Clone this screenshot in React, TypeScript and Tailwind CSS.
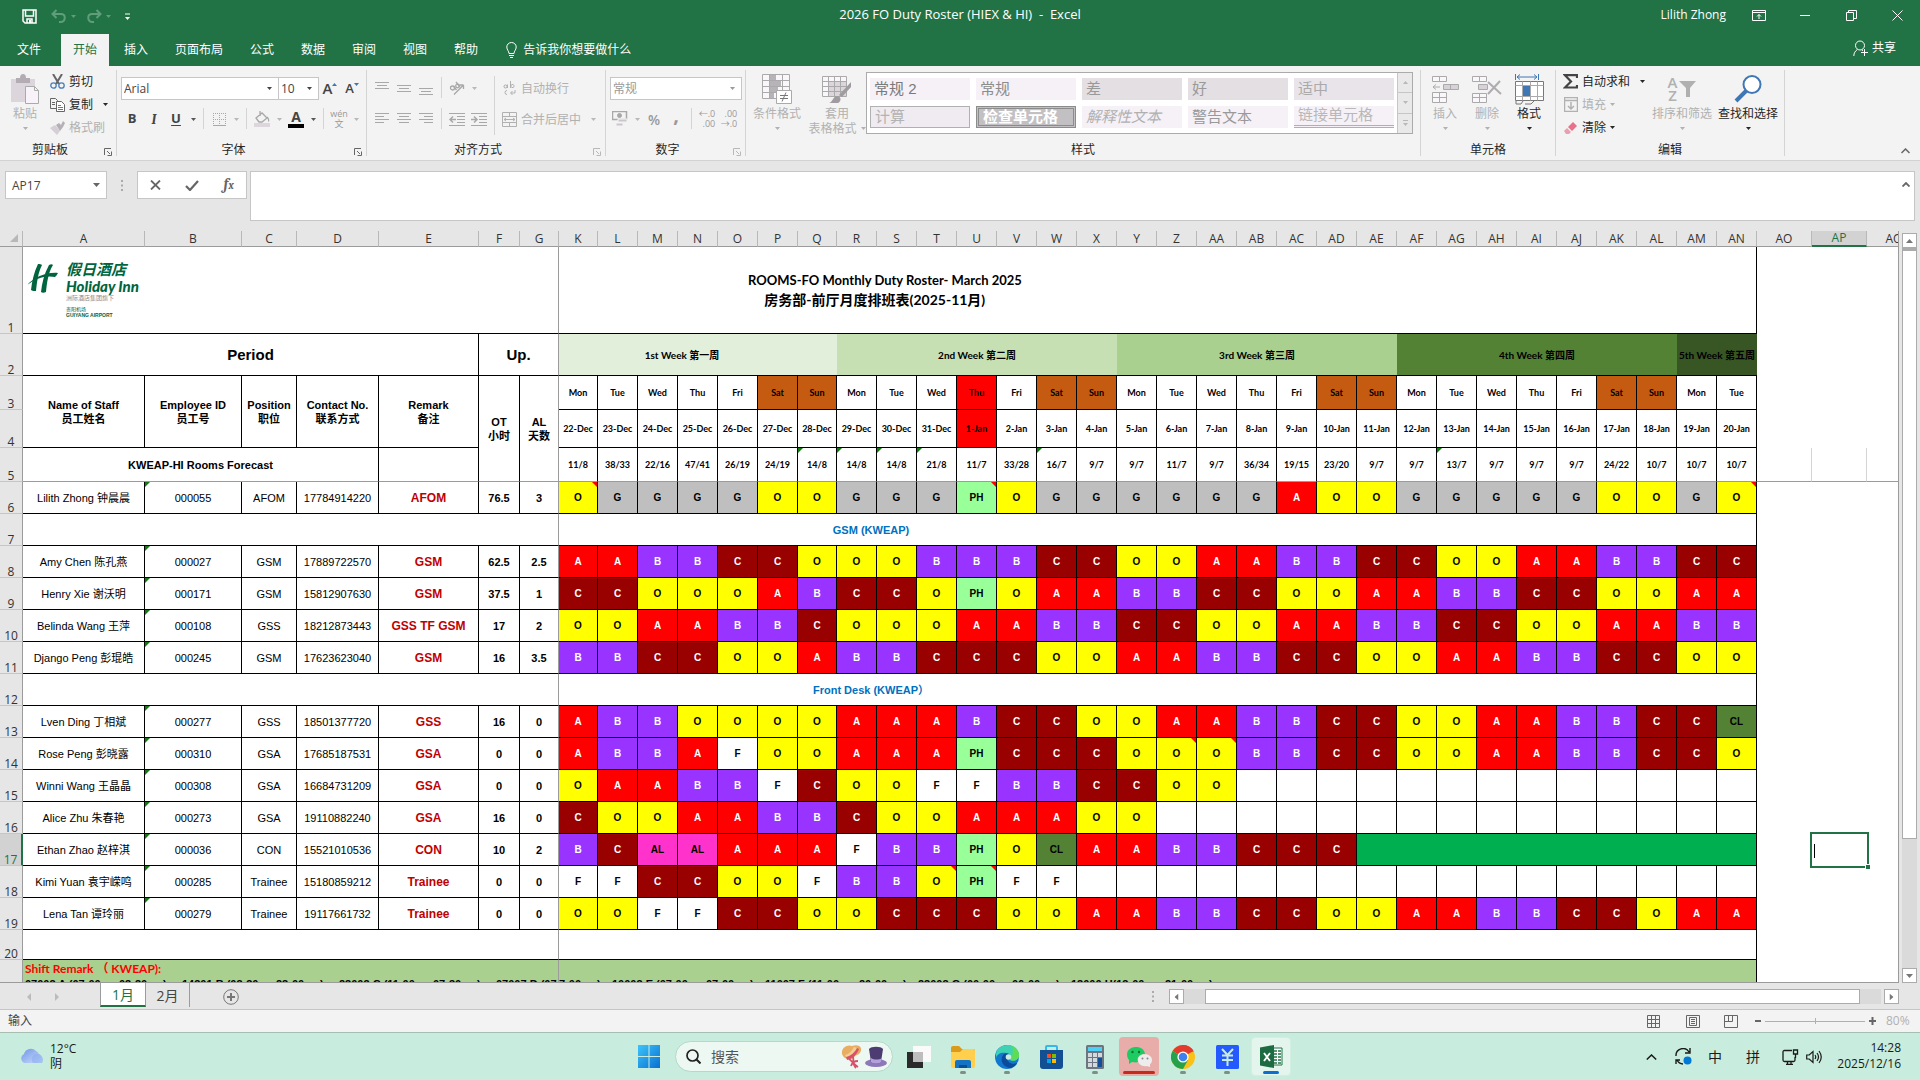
import React from 'react';
import { clsx } from 'clsx';

interface Staff {
  row: number;
  name: string;
  id: string;
  position: string;
  contact: string;
  remark: string;
  ot: string;
  al: string;
  shifts: string;
  notes?: number[];
  fill?: number;
}

const DATE_COLUMNS = 'K L M N O P Q R S T U V W X Y Z AA AB AC AD AE AF AG AH AI AJ AK AL AM AN'.split(' ');
const WEEKDAYS = ['Mon', 'Tue', 'Wed', 'Thu', 'Fri', 'Sat', 'Sun'];
const HOLIDAY = 10;

const DATES = DATE_COLUMNS.map((_, i) => (i < 10 ? `${22 + i}-Dec` : `${i - 9}-Jan`));

const FORECAST =
  '11/8 38/33 22/16 47/41 26/19 24/19 14/8 14/8 14/8 21/8 11/7 33/28 16/7 9/7 9/7 11/7 9/7 36/34 19/15 23/20 9/7 9/7 13/7 9/7 9/7 9/7 24/22 10/7 10/7 10/7'.split(' ');
const FORECAST_FLAGS = [6, 7, 8, 9, 12, 22];

const WEEKS = [
  { label: '1st Week 第一周', span: 7, tone: 'bg-[#e2efda] pr-8' },
  { label: '2nd Week 第二周', span: 7, tone: 'bg-[#c6e0b4]' },
  { label: '3rd Week 第三周', span: 7, tone: 'bg-[#a9d08e]' },
  { label: '4th Week 第四周', span: 7, tone: 'bg-[#548235]' },
  { label: '5th Week 第五周', span: 2, tone: 'bg-[#375623]' },
];

const AFOM: Staff[] = [
  { row: 6, name: 'Lilith Zhong 钟晨晨', id: '000055', position: 'AFOM', contact: '17784914220', remark: 'AFOM', ot: '76.5', al: '3', shifts: 'O G G G G O O G G G PH O G G G G G G A O O G G G G G O O G O', notes: [0, 10, 29] },
];

const GSM: Staff[] = [
  { row: 8, name: 'Amy Chen 陈孔燕', id: '000027', position: 'GSM', contact: '17889722570', remark: 'GSM', ot: '62.5', al: '2.5', shifts: 'A A B B C C O O O B B B C C O O A A B B C C O O A A B B C C' },
  { row: 9, name: 'Henry Xie 谢沃明', id: '000171', position: 'GSM', contact: '15812907630', remark: 'GSM', ot: '37.5', al: '1', shifts: 'C C O O O A B C C O PH O A A B B C C O O A A B B C C O O A A' },
  { row: 10, name: 'Belinda Wang 王萍', id: '000108', position: 'GSS', contact: '18212873443', remark: 'GSS TF GSM', ot: '17', al: '2', shifts: 'O O A A B B C O O O A A B B C C O O A A B B C C O O A A B B' },
  { row: 11, name: 'Django Peng 彭琨皓', id: '000245', position: 'GSM', contact: '17623623040', remark: 'GSM', ot: '16', al: '3.5', shifts: 'B B C C O O A B B C C C O O A A B B C C O O A A B B C C O O' },
];

const FRONT_DESK: Staff[] = [
  { row: 13, name: 'Lven Ding 丁相斌', id: '000277', position: 'GSS', contact: '18501377720', remark: 'GSS', ot: '16', al: '0', shifts: 'A B B O O O O A A A B C C O O A A B B C C O O A A B B C C CL' },
  { row: 14, name: 'Rose Peng 彭晓露', id: '000310', position: 'GSA', contact: '17685187531', remark: 'GSA', ot: '0', al: '0', shifts: 'A B B A F O O A A A PH C C C O O O B B C C O O A A B B C C O', notes: [15, 16] },
  { row: 15, name: 'Winni Wang 王晶晶', id: '000308', position: 'GSA', contact: '16684731209', remark: 'GSA', ot: '0', al: '0', shifts: 'O A A B B F C O O F F B B C C O O' },
  { row: 16, name: 'Alice Zhu 朱春艳', id: '000273', position: 'GSA', contact: '19110882240', remark: 'GSA', ot: '16', al: '0', shifts: 'C O O A A B B C O O A A A O O' },
  { row: 17, name: 'Ethan Zhao 赵梓淇', id: '000036', position: 'CON', contact: '15521010536', remark: 'CON', ot: '10', al: '2', shifts: 'B C AL AL A A A F B B PH O CL A A B B C C C', fill: 10 },
  { row: 18, name: 'Kimi Yuan 袁宇嵘鸣', id: '000285', position: 'Trainee', contact: '15180859212', remark: 'Trainee', ot: '0', al: '0', shifts: 'F F C C O O F B B O PH F F', notes: [9, 10] },
  { row: 19, name: 'Lena Tan 谭玲丽', id: '000279', position: 'Trainee', contact: '19117661732', remark: 'Trainee', ot: '0', al: '0', shifts: 'O O F F C C O O C C C O O A A B B C C O O A A B B C C O A A' },
];

const SHIFT_TONE: Record<string, string> = {
  A: 'bg-[#ff0000] text-white',
  B: 'bg-[#9933ff] text-white',
  C: 'bg-[#990000] text-white',
  O: 'bg-[#ffff00] text-black',
  G: 'bg-[#bfbfbf] text-black',
  F: 'bg-white text-black',
  PH: 'bg-[#99ff99] text-black',
  AL: 'bg-[#ff33cc] text-black',
  CL: 'bg-[#548235] text-black',
};

const TABS = ['插入', '页面布局', '公式', '数据', '审阅', '视图', '帮助'];

/* ---------- small shared pieces ---------- */

interface ArtProps {
  w: number;
  h: number;
  className?: string;
  children: React.ReactNode;
}

const Art: React.FC<ArtProps> = ({ w, h, className, children }) => (
  <svg width={w} height={h} viewBox={`0 0 ${w} ${h}`} fill="none" stroke="currentColor" className={clsx('shrink-0', className)} aria-hidden="true">
    {children}
  </svg>
);

const Arrow: React.FC<{ className?: string }> = ({ className }) => (
  <Art w={5} h={3} className={className}>
    <path d="M0 0h5L2.5 3z" fill="currentColor" stroke="none" />
  </Art>
);

const ArrowButton: React.FC<{ label: string; off?: boolean }> = ({ label, off }) => (
  <button aria-label={label} className={clsx('flex h-[22px] w-3 items-center justify-center', off ? 'text-[#b8b8b8]' : 'text-[#555]')}>
    <Arrow />
  </button>
);

const Tool: React.FC<{ label: string; off?: boolean; children: React.ReactNode }> = ({ label, off, children }) => (
  <button aria-label={label} className={clsx('flex h-[22px] w-[22px] items-center justify-center', off ? 'text-[#a8a8a8]' : 'text-[#444]')}>
    {children}
  </button>
);

const Sep = () => (
  <div className="flex w-[9px] justify-center">
    <div className="h-[21px] w-px bg-[#d4d4d4]" />
  </div>
);

const Group: React.FC<{ label: string; launcher?: 'on' | 'off'; className?: string; children: React.ReactNode }> = ({ label, launcher, className, children }) => (
  <section className={clsx('relative my-1 flex flex-col border-r border-[#d4d4d4]', className)}>
    <div className="flex h-[71px]">{children}</div>
    <div className={clsx('h-[15px] text-center leading-[17px] text-[#262626]', launcher && 'pr-4')}>{label}</div>
    {launcher && (
      <button aria-label={`${label}设置`} className={clsx('absolute right-1 bottom-0', launcher === 'on' ? 'text-[#666]' : 'text-[#b8b8b8]')}>
        <Art w={8} h={8}>
          <path d="M.5 7V.5H7M3 3l3 3M7.5 3.5v4h-4" />
        </Art>
      </button>
    )}
  </section>
);

const BigButton: React.FC<{ label: string; off?: boolean; className?: string; children: React.ReactNode }> = ({ label, off, className, children }) => (
  <button className={clsx('flex flex-col items-center pt-1 whitespace-nowrap', off ? 'text-[#b1b1b1]' : 'text-[#262626]', className)}>
    <span className="flex h-[30px] items-center">{children}</span>
    <span className="leading-5">{label}</span>
    <span className="flex h-2 items-center">
      <Arrow />
    </span>
  </button>
);

const SmallButton: React.FC<{ label: string; off?: boolean; arrow?: 'near' | 'far'; children: React.ReactNode }> = ({ label, off, arrow, children }) => (
  <button className={clsx('flex h-[23px] items-center gap-1 whitespace-nowrap', off ? 'text-[#b1b1b1]' : 'text-[#262626]')}>
    <span className="flex w-[15px] justify-center">{children}</span>
    {label}
    {arrow && <Arrow className={arrow === 'far' ? 'ml-1.5' : undefined} />}
  </button>
);

const Lines: React.FC<{ rows: [number, number, number][] }> = ({ rows }) => (
  <Art w={14} h={14}>
    {rows.map(([x1, x2, y]) => (
      <path key={y} d={`M${x1} ${y}.5H${x2}`} />
    ))}
  </Art>
);

const Picker: React.FC<{ label: string; value: string; off?: boolean; className?: string }> = ({ label, value, off, className }) => (
  <div className={clsx('relative h-[23px] border border-[#c6c6c6] bg-white', off ? 'text-[#9a9a9a]' : 'text-[#444]', className)}>
    <select aria-label={label} defaultValue={value} className="block h-full w-full appearance-none bg-transparent pl-0.5 outline-none">
      <option>{value}</option>
    </select>
    <Arrow className="pointer-events-none absolute top-[9px] right-1.5" />
  </div>
);

/* ---------- title bar and ribbon ---------- */

const TitleBar = () => (
  <header className="grid h-[34px] shrink-0 grid-cols-[1fr_auto_1fr] text-white">
    <div className="flex items-center pb-0.5 pl-[22px]">
      <button aria-label="保存">
        <Art w={15} h={15}>
          <path d="M1 1h13v13H3L1 12zM3.500 1v6h8V1M5 14v-4h5v4" strokeWidth="1.500" />
          <path d="M7 11h2v3H7z" fill="currentColor" stroke="none" />
        </Art>
      </button>
      <button aria-label="撤消" className="ml-3.5 flex items-center gap-1 text-[#5f9d7b]">
        <Art w={16} h={14}>
          <path d="M5.500 1L1.500 5l4 4M2 5h8c5 0 5 7 0 8H8" strokeWidth="2" />
        </Art>
        <Arrow />
      </button>
      <button aria-label="恢复" className="ml-2.5 flex items-center gap-1 text-[#5f9d7b]">
        <Art w={16} h={14}>
          <path d="M10.500 1l4 4-4 4M14 5H6C1 5 1 12 6 13h2" strokeWidth="2" />
        </Art>
        <Arrow />
      </button>
      <button aria-label="自定义快速访问工具栏" className="ml-3.5">
        <Art w={5} h={7}>
          <path d="M0 1h5" />
          <path d="M0 4h5L2.500 7z" fill="currentColor" stroke="none" />
        </Art>
      </button>
    </div>
    <h1 className="self-center pb-1 text-[13px] whitespace-pre">2026 FO Duty Roster (HIEX &amp; HI)  -  Excel</h1>
    <div className="flex h-[30px] items-center justify-end">
      <span className="mr-2.5">Lilith Zhong</span>
      <button aria-label="功能区显示选项" className="flex w-[46px] justify-center">
        <Art w={14} h={11}>
          <path d="M.5.5h13v10H.5zM.5 2.500h13M7 9V4.500M5 6.500l2-2 2 2" />
        </Art>
      </button>
      <button aria-label="最小化" className="flex w-[46px] justify-center">
        <Art w={10} h={1}>
          <path d="M0 .5h10" />
        </Art>
      </button>
      <button aria-label="还原" className="flex w-[46px] justify-center">
        <Art w={11} h={11}>
          <path d="M.5 2.500h7v8h-7zM2.500 2.500v-2h8v8h-3" />
        </Art>
      </button>
      <button aria-label="关闭" className="flex w-[46px] justify-center">
        <Art w={11} h={11}>
          <path d="M.5.5l10 10M10.500.5l-10 10" />
        </Art>
      </button>
    </div>
  </header>
);

const RibbonTabs = () => (
  <nav className="flex h-8 shrink-0 items-stretch text-white">
    <button className="w-[58px]">文件</button>
    <div className="ml-[3px] flex gap-[3px]">
      <button className="bg-[#f3f3f3] px-[12px] text-[#217346]">开始</button>
      {TABS.map((tab) => (
        <button key={tab} className="px-[12px]">{tab}</button>
      ))}
    </div>
    <button className="ml-4 flex items-center gap-1.5">
      <Art w={11} h={16}>
        <path d="M3 11.500C3 9 .8 8 .8 5a4.700 4.500 0 019.400 0C10.200 8 8 9 8 11.500zM3 13.500h5M4 15.500h3" />
      </Art>
      告诉我你想要做什么
    </button>
    <button className="mr-6 ml-auto flex items-center gap-1 pb-1">
      <Art w={15} h={16}>
        <circle cx="7" cy="5.500" r="4.500" />
        <path d="M.8 16c0-3 1.500-5 3.500-6.500M9 10l1 .8M11.500 9v7M8 12.500h7" />
      </Art>
      共享
    </button>
  </nav>
);

const STYLE_CELLS = [
  { label: '常规 2', tone: 'bg-[#f5f1f7] text-[#7a7a7a]' },
  { label: '常规', tone: 'bg-[#f5f1f7] text-[#8c8c8c]' },
  { label: '差', tone: 'bg-[#e3dfe2] text-[#999]' },
  { label: '好', tone: 'bg-[#e3dfe2] text-[#999]' },
  { label: '适中', tone: 'bg-[#e8e4e9] text-[#aaa]' },
  { label: '计算', tone: 'bg-[#efebf0] text-[#b3b3b3] border border-[#b0b0b0]' },
  { label: '检查单元格', tone: 'bg-[#c2c0c3] text-white font-bold border-[3px] border-double border-[#8c8c8c]' },
  { label: '解释性文本', tone: 'bg-[#f5f1f7] text-[#b0b0b0] italic' },
  { label: '警告文本', tone: 'bg-[#f5f1f7] text-[#999]' },
  { label: '链接单元格', tone: 'bg-[#f5f1f7] text-[#b8b8b8] border-b-[3px] border-double border-[#b0b0b0]' },
];

const Ribbon = () => (
  <div className="flex h-[95px] shrink-0 border-b border-[#d2d2d2] bg-[#f3f3f3]">
    <Group label="剪贴板" launcher="on" className="w-[117px] shrink-0">
      <BigButton label="粘贴" off className="w-[50px] shrink-0">
        <Art w={28} h={30}>
          <path d="M0 5h24v23H0z" fill="#dcd6dc" stroke="none" />
          <path d="M5 4h4a3 4 0 016 0h4v5H5z" fill="#b3adb3" stroke="none" />
          <path d="M14.500 12.500h9l4 4v13h-13z" fill="#f7f3f8" stroke="#aaa" />
          <path d="M23.500 12.500v4h4" stroke="#aaa" />
        </Art>
      </BigButton>
      <div className="shrink-0">
        <SmallButton label="剪切">
          <Art w={15} h={15}>
            <path d="M3 0l6 10M12 0L6 10" stroke="#666" strokeWidth="2" />
            <circle cx="3.500" cy="11.500" r="2.700" stroke="#4a7ebb" strokeWidth="1.300" />
            <circle cx="11.500" cy="11.500" r="2.700" stroke="#4a7ebb" strokeWidth="1.300" />
          </Art>
        </SmallButton>
        <SmallButton label="复制" arrow="far">
          <Art w={15} h={14}>
            <path d="M.5.5h5l2 2v8h-7zM2 4.500h3M2 6.500h3" stroke="#666" />
            <path d="M6.500 3.500h5l3 3v7h-8z" fill="#fff" stroke="#666" />
            <path d="M8 7.500h3M8 9.500h5M8 11.500h5" stroke="#4a7ebb" />
          </Art>
        </SmallButton>
        <SmallButton label="格式刷" off>
          <Art w={15} h={14}>
            <path d="M0 7l5-3 5 6-3 4z" fill="#d5cfd5" stroke="none" />
            <path d="M6 4l3-2 2 2 2-4 2 2-2 4-3 4z" fill="#b5b0b5" stroke="none" />
          </Art>
        </SmallButton>
      </div>
    </Group>

    <Group label="字体" launcher="on" className="w-[250px] shrink-0">
      <div className="pt-[7px] pl-1">
        <div className="flex h-[23px] items-center">
          <Picker label="字体" value="Arial" className="w-[158px]" />
          <Picker label="字号" value="10" className="w-[40px] border-l-0" />
          <Tool label="增大字号">
            <span className="text-[15px] font-semibold">A</span>
            <Art w={5} h={12}><path d="M0 3h5L2.500 0z" fill="#3f77b5" stroke="none" /></Art>
          </Tool>
          <Tool label="减小字号">
            <span className="text-[13px] font-semibold">A</span>
            <Art w={5} h={12}><path d="M0 0h5L2.500 3z" fill="#3f77b5" stroke="none" /></Art>
          </Tool>
        </div>
        <div className="mt-2 flex">
          <Tool label="加粗"><b className="text-[13px]">B</b></Tool>
          <Tool label="倾斜"><i className="font-serif text-[14px] font-bold">I</i></Tool>
          <Tool label="下划线"><span className="text-[13px] font-bold underline underline-offset-2">U</span></Tool>
          <ArrowButton label="下划线选项" />
          <Sep />
          <Tool label="边框" off>
            <Art w={13} h={13}>
              <path d="M.5 0v12M6.500 0v12M12.500 0v12M0 .5h13M0 6.500h13" strokeDasharray="1 1" />
              <path d="M0 12.500h13" />
            </Art>
          </Tool>
          <ArrowButton label="边框选项" off />
          <Sep />
          <Tool label="填充颜色" off>
            <Art w={16} h={16}>
              <path d="M2 7l6-5 5 5-5 4H5zM6 0v5M13 6c2 2 2 4 1 4" strokeWidth="1.300" />
              <path d="M0 12h16v4H0z" fill="#ddd6dd" stroke="none" />
            </Art>
          </Tool>
          <ArrowButton label="填充颜色选项" off />
          <Tool label="字体颜色">
            <span className="flex flex-col items-center">
              <span className="text-[14px] leading-3 font-bold">A</span>
              <span className="mt-px h-[4px] w-4 bg-black" />
            </span>
          </Tool>
          <ArrowButton label="字体颜色选项" />
          <Sep />
          <Tool label="拼音指南" off>
            <span className="flex flex-col items-center text-[9px] leading-[10px] text-[#999]">
              <span>wén</span>
              <span>文</span>
            </span>
          </Tool>
          <ArrowButton label="拼音选项" off />
        </div>
      </div>
    </Group>

    <Group label="对齐方式" launcher="off" className="w-[239px] shrink-0">
      <div className="w-[127px] pt-[7px] pl-[4px]">
        <div className="flex h-[23px]">
          <Tool label="顶端对齐" off><Lines rows={[[0, 14, 1], [2, 12, 4], [0, 14, 7]]} /></Tool>
          <Tool label="垂直居中" off><Lines rows={[[0, 14, 4], [2, 12, 7], [0, 14, 10]]} /></Tool>
          <Tool label="底端对齐" off><Lines rows={[[0, 14, 7], [2, 12, 10], [0, 14, 13]]} /></Tool>
          <Sep />
          <Tool label="方向" off>
            <Art w={16} h={14}>
              <path d="M5 13.500L14.500 4M14.500 4h-4M14.500 4v4" strokeWidth="1.300" />
              <circle cx="3.500" cy="7" r="2" strokeWidth="1.300" />
              <path d="M4.500 5l3 4M7 1l4 5" strokeWidth="1.300" />
              <circle cx="8.500" cy="5" r="1.800" strokeWidth="1.300" />
            </Art>
          </Tool>
          <ArrowButton label="方向选项" off />
        </div>
        <div className="mt-2 flex">
          <Tool label="左对齐" off><Lines rows={[[0, 14, 1], [0, 9, 4], [0, 14, 7], [0, 9, 10]]} /></Tool>
          <Tool label="居中" off><Lines rows={[[0, 14, 1], [2, 12, 4], [0, 14, 7], [2, 12, 10]]} /></Tool>
          <Tool label="右对齐" off><Lines rows={[[0, 14, 1], [5, 14, 4], [0, 14, 7], [5, 14, 10]]} /></Tool>
          <Sep />
          <Tool label="减少缩进量" off>
            <Art w={16} h={13}><path d="M0 .5h16M8 3.500h8M8 6.500h8M8 9.500h8M0 12.500h16" /><path d="M1 6.500h6M4 3.500l-3 3 3 3" strokeWidth="1.500" /></Art>
          </Tool>
          <Tool label="增加缩进量" off>
            <Art w={16} h={13}><path d="M0 .5h16M8 3.500h8M8 6.500h8M8 9.500h8M0 12.500h16" /><path d="M0 6.500h6M3 3.500l3 3-3 3" strokeWidth="1.500" /></Art>
          </Tool>
        </div>
      </div>
      <div className="my-1.5 w-px bg-[#d4d4d4]" />
      <div className="pt-[7px] pl-[7px]">
        <SmallButton label="自动换行" off>
          <Art w={13} h={15}>
            <path d="M4.500 3.500v3.500M7.500 0v7M1 6a1.500 1.500 0 103-1 1.500 1.500 0 00-3 1M8 5.500a1.500 1.500 0 103-1 1.500 1.500 0 00-3 1M4 9.500a2 2 0 100 4M12 9v3H8M9.500 10l-2 2 2 2" />
          </Art>
        </SmallButton>
        <div className="mt-2 flex">
          <SmallButton label="合并后居中" off>
            <Art w={15} h={15}><path d="M.5.5h14v14H.5zM.5 4.500h14M.5 10.500h14M7.500.5v4M7.500 10.500v4M2 7.500h11M4 6L2 7.500 4 9M11 6l2 1.500L11 9" /></Art>
          </SmallButton>
          <span className="pl-1.5"><ArrowButton label="合并选项" off /></span>
        </div>
      </div>
    </Group>

    <Group label="数字" launcher="off" className="w-[140px] shrink-0">
      <div className="pt-[7px] pl-[3px]">
        <Picker label="数字格式" value="常规" off className="ml-px w-[132px]" />
        <div className="mt-2 flex">
          <Tool label="会计数字格式" off>
            <Art w={16} h={16}>
              <path d="M.5.5h14v8H.5z" strokeWidth="1.500" />
              <circle cx="7.500" cy="4.500" r="2" fill="currentColor" />
              <path d="M6 8h9v3H6zM4 12h7v3H4z" fill="#ccc6cc" stroke="#f3f3f3" />
            </Art>
          </Tool>
          <ArrowButton label="会计格式选项" off />
          <Tool label="百分比样式" off><span className="text-[14px] font-semibold text-[#999]">%</span></Tool>
          <Tool label="千位分隔样式" off><span className="pb-2 text-[20px] font-bold text-[#999]">,</span></Tool>
          <Sep />
          <Tool label="增加小数位数" off>
            <span className="flex flex-col text-right text-[9px] leading-[10px] text-[#999]">
              <span>←.0</span>
              <span>.00</span>
            </span>
          </Tool>
          <Tool label="减少小数位数" off>
            <span className="flex flex-col text-right text-[9px] leading-[10px] text-[#999]">
              <span>.00</span>
              <span>→.0</span>
            </span>
          </Tool>
        </div>
      </div>
    </Group>

    <Group label="样式" className="min-w-[300px] flex-1">
      <BigButton label="条件格式" off className="w-[62px] shrink-0">
        <Art w={30} h={30} className="text-[#aaa]">
          <path d="M.5.5h27v24H.5zM.5 6.500h27M.5 12.500h27M.5 18.500h27M7.500.5v24M20.500.5v24" fill="#faf7fa" />
          <path d="M8 1h6v5H8zM8 7h11v5H8zM8 13h8v5H8zM8 19h4v5H8z" fill="#b8b3b8" stroke="none" />
          <path d="M14.500 16.500h15v13h-15z" fill="#fff" />
          <path d="M18 21.500h8M18 24.500h8M24 18.500l-4 9" stroke="#777" />
        </Art>
      </BigButton>
      <button className="flex w-[58px] shrink-0 flex-col items-center pt-1 whitespace-nowrap text-[#b1b1b1]">
        <Art w={30} h={30} className="text-[#aaa]">
          <path d="M.5 2.500h24v20H.5z" fill="#faf7fa" />
          <path d="M7 8h17v14H7z" fill="#dcd6dc" stroke="none" />
          <path d="M.5 7.500h24M.5 12.500h24M.5 17.500h24M6.500 2.500v20M12.500 2.500v20M18.500 2.500v20" />
          <path d="M29 8v5l-9 10-3-2z" fill="#a09ba0" stroke="none" />
          <path d="M7 29c4-1 4-7 8-7s5 5 1 7z" fill="#a09ba0" stroke="none" />
        </Art>
        <span className="pt-0.5 leading-[15px]">套用</span>
        <span className="flex items-center gap-1 leading-[15px]">表格格式<Arrow /></span>
      </button>
      <div className="mt-0.5 mr-[7px] flex h-[62px] min-w-0 flex-1 border border-[#ababab] bg-white">
        <div className="grid min-w-0 flex-1 grid-cols-5 gap-1.5 overflow-hidden px-[3px] py-[5px] font-[family-name:'Liberation_Sans','Noto_Sans_CJK_SC',sans-serif] text-[15px]">
          {STYLE_CELLS.map((cell) => (
            <button key={cell.label} className={clsx('flex h-[22px] items-center px-1 text-left whitespace-nowrap', cell.tone)}>
              {cell.label}
            </button>
          ))}
        </div>
        <div className="flex w-[15px] flex-col border-l border-[#c6c6c6] bg-[#e9e9e9] text-[#b8b8b8]">
          <button aria-label="上一行" className="flex flex-1 items-center justify-center"><Arrow className="rotate-180" /></button>
          <button aria-label="下一行" className="flex flex-1 items-center justify-center border-y border-[#c6c6c6]"><Arrow /></button>
          <button aria-label="其他样式" className="flex flex-1 flex-col items-center justify-center gap-0.5">
            <span className="h-px w-[5px] bg-[#b8b8b8]" />
            <Arrow />
          </button>
        </div>
      </div>
    </Group>

    <Group label="单元格" className="w-[135px] shrink-0">
      <BigButton label="插入" off className="ml-[3px] w-[42px]">
        <Art w={27} h={28} className="text-[#aaa]">
          <path d="M.5 1.500h14v5H.5zM7.500 1.500v5M.5 17.500h14v10H.5zM.5 22.500h14M7.500 17.500v10M1 12h7M4 9.500L1 12l3 2.500" fill="#faf7fa" />
          <path d="M11.500 9.500h15v5h-15zM18.500 9.500v5" fill="#d8d2d8" />
        </Art>
      </BigButton>
      <BigButton label="删除" off className="w-[42px]">
        <Art w={30} h={28} className="text-[#aaa]">
          <path d="M.5 1.500h14v5H.5zM7.500 1.500v5M.5 18.500h14v9H.5zM.5 22.500h14M7.500 18.500v9" fill="#faf7fa" />
          <path d="M6.500 9.500h9v5h-9z" fill="#d8d2d8" />
          <path d="M16 7l13 12M28 6L16 19" stroke="#b0abb0" strokeWidth="2" />
        </Art>
      </BigButton>
      <BigButton label="格式" className="w-[42px]">
        <Art w={29} h={31} className="text-[#777]">
          <path d="M.5 0v6M23.500 0v6M2 3h20M5 .5L2 3l3 2.500M19 .5L22 3l-3 2.500" stroke="#3f77b5" />
          <path d="M.5 7.500h28v19H.5z" fill="#fff" />
          <path d="M.5 11.500h28M.5 22.500h28M7.500 7.500v19M15.500 7.500v19M22.500 7.500v19" stroke="#aaa" />
          <path d="M8 12h7v10H8z" fill="#3f77b5" stroke="none" />
          <path d="M1 27v3h5l2-3M10 30h6l3-3" />
        </Art>
      </BigButton>
    </Group>

    <Group label="编辑" className="w-[229px] shrink-0">
      <div className="w-[92px] shrink-0 pl-[7px]">
        <button className="flex h-[23px] items-center gap-1 whitespace-nowrap text-[#262626]">
          <Art w={15} h={15}><path d="M14 4V1.200H2L8 7.500l-6 6h12V11" stroke="#444" strokeWidth="2.200" /></Art>
          自动求和
          <Arrow className="ml-1.5" />
        </button>
        <SmallButton label="填充" off arrow="near">
          <Art w={14} h={15}><path d="M.5.5h13v14H.5zM.5 3.500h13M7 5v7M4 9l3 3 3-3" strokeWidth="1.500" /></Art>
        </SmallButton>
        <SmallButton label="清除" arrow="near">
          <Art w={13} h={12}><path d="M4 5l5-5 4 4-5 5z" fill="#e8708a" stroke="none" /><path d="M3 6l4 4-2 2H2L0 9z" fill="#e8a0b0" stroke="none" /></Art>
        </SmallButton>
      </div>
      <BigButton label="排序和筛选" off className="w-[68px]">
        <span className="flex items-center gap-0.5">
          <span className="flex flex-col text-[15px] leading-[13px] font-semibold">
            <span>A</span>
            <span>Z</span>
          </span>
          <Art w={17} h={17}><path d="M0 0h17l-6 7v9H7V7z" fill="#b0b0b0" stroke="none" /></Art>
        </span>
      </BigButton>
      <BigButton label="查找和选择" className="w-[64px]">
        <Art w={28} h={28}>
          <circle cx="18" cy="9.500" r="8.500" fill="#fff" stroke="#3f77b5" strokeWidth="2" />
          <path d="M12 16L2 26" stroke="#3f77b5" strokeWidth="4" />
        </Art>
      </BigButton>
    </Group>

    <button aria-label="折叠功能区" className="mr-[10px] mb-1.5 ml-[116px] self-end text-[#666]">
      <Art w={9} h={6}><path d="M.5 5l4-4 4 4" strokeWidth="1.500" /></Art>
    </button>
  </div>
);

const FormulaBar = () => (
  <div className="flex shrink-0 items-start pt-2.5 pr-[5px] pb-2.5 pl-[5px]">
    <div className="flex h-7 w-[102px] items-center border border-[#c6c6c6] bg-white">
      <input aria-label="名称框" defaultValue="AP17" className="h-full w-[87px] pl-1.5 text-[#444] outline-none" />
      <button aria-label="名称列表" className="text-[#666]">
        <Art w={7} h={4}><path d="M0 0h7L3.500 4z" fill="currentColor" stroke="none" /></Art>
      </button>
    </div>
    <div className="flex h-7 w-[30px] items-center justify-center text-[#aaa]">
      <Art w={2} h={11}><path d="M1 0v2M1 4.500v2M1 9v2" strokeWidth="2" /></Art>
    </div>
    <div className="flex h-7 w-[110px] items-center justify-around border border-[#c6c6c6] bg-white text-[#666]">
      <button aria-label="取消"><Art w={11} h={10}><path d="M1 .5l9 9M10 .5l-9 9" strokeWidth="1.800" /></Art></button>
      <button aria-label="输入"><Art w={14} h={11}><path d="M1 6l4 4 8-9" strokeWidth="2.200" /></Art></button>
      <button aria-label="插入函数" className="font-serif text-[15px] leading-4 font-bold italic">f<span className="text-[11px]">x</span></button>
    </div>
    <div className="ml-[3px] flex h-[50px] flex-1 border border-[#c6c6c6] bg-white">
      <textarea aria-label="编辑栏" className="h-full flex-1 resize-none px-1 outline-none" />
      <button aria-label="折叠编辑栏" className="mt-2.5 mr-1 self-start text-[#666]">
        <Art w={8} h={5}><path d="M.5 4.500l3.500-3.500 3.500 3.500" strokeWidth="1.800" /></Art>
      </button>
    </div>
  </div>
);

/* ---------- sheet ---------- */

const Flag = () => <span className="absolute top-0 left-0 size-[5px] bg-[#107c10] [clip-path:polygon(0_0,100%_0,0_100%)]" />;

const Note = () => <span className="absolute top-0 right-0 size-[5px] bg-[#ff0000] [clip-path:polygon(0_0,100%_0,100%_100%)]" />;

const RowHead: React.FC<{ n?: number; h: string }> = ({ n, h }) => (
  <th
    scope="row"
    className={clsx(
      'border-r border-b text-center align-bottom text-[12px] leading-[11px] font-normal font-[family-name:"Open_Sans",sans-serif]',
      n === 17 ? 'border-r-2 border-r-[#217346] border-b-[#c6c6c6] bg-[#d2d2d2] text-[#217346]' : 'border-r-[#9b9b9b] border-b-[#c6c6c6] bg-[#e6e6e6] text-[#333]',
      h,
    )}
  >
    {n}
  </th>
);

const CELL = 'relative border-r border-b border-black text-center';

const Blank: React.FC<{ selected?: boolean }> = ({ selected }) => (
  <>
    <td />
    <td className="relative">
      {selected && (
        <span className="absolute -inset-0.5 border-2 border-[#217346] bg-white">
          <span className="absolute top-2.5 left-0.5 h-3.5 w-px bg-black" />
          <span className="absolute -right-[3px] -bottom-[3px] size-[5px] border-t border-l border-white bg-[#217346]" />
        </span>
      )}
    </td>
    <td />
  </>
);

const StaffRow: React.FC<{ staff: Staff }> = ({ staff }) => {
  const shifts = staff.shifts.split(' ');
  const emptyCount = 30 - shifts.length - (staff.fill ?? 0);

  return (
    <tr>
      <RowHead n={staff.row} h="h-8" />
      <td className={CELL}>{staff.name}</td>
      <td className={CELL}><Flag />{staff.id}</td>
      <td className={CELL}>{staff.position}</td>
      <td className={CELL}>{staff.contact}</td>
      <td className={clsx(CELL, 'text-[12px] font-bold text-[#c00000]')}>{staff.remark}</td>
      <td className={clsx(CELL, 'font-bold')}>{staff.ot}</td>
      <td className={clsx(CELL, 'border-r-[#9b9b9b] font-bold')}>{staff.al}</td>
      {shifts.map((shift, i) => (
        <td key={DATE_COLUMNS[i]} className={clsx(CELL, 'text-[10px] font-bold', SHIFT_TONE[shift])}>
          {staff.notes?.includes(i) && <Note />}
          {shift}
        </td>
      ))}
      {DATE_COLUMNS.slice(0, emptyCount).map((col) => (
        <td key={`empty-${col}`} className={CELL} />
      ))}
      {staff.fill && <td colSpan={staff.fill} className={clsx(CELL, 'bg-[#00b050]')} />}
      <Blank selected={staff.row === 17} />
    </tr>
  );
};

const SectionRow: React.FC<{ n: number; h?: string; label?: string }> = ({ n, h = 'h-8', label }) => (
  <tr>
    <RowHead n={n} h={h} />
    <td colSpan={7} className={clsx(CELL, 'border-r-[#9b9b9b]')} />
    <td colSpan={30} className={CELL}>
      <div className="w-[624px] font-bold text-[#0070c0]">{label}</div>
    </td>
    <Blank />
  </tr>
);

const Logo = () => (
  <div className="flex gap-2 pt-[17px] pl-1 text-left text-[#00653e]">
    <Art w={31} h={29}>
      <path d="M0 21C8 13 19 8 31 9c-1 2-2 3-3 4-9-2-19 1-28 8z" fill="currentColor" stroke="none" />
      <path d="M11 0c2 0 3 0 4 1C11 9 10 18 9 27c-2 0-4 0-5-1C5 17 7 8 11 0zM22 1c2-1 3-1 4 0-5 8-6 18-7 27-2 1-4 1-5 0 1-9 3-18 8-27z" fill="currentColor" stroke="none" />
    </Art>
    <div className="whitespace-nowrap">
      <div className="text-[15px] leading-3 font-bold italic">假日酒店</div>
      <div className="pt-0.5 font-[family-name:Lato,sans-serif] text-[15px] leading-4 font-black italic">Holiday Inn</div>
      <div className="text-[6px] leading-2 text-[#8a8a8a]">洲际酒店集团旗下</div>
      <div className="pt-1 text-[5px] leading-1.5">贵阳机场</div>
      <div className="text-[5px] leading-1.5 font-bold">GUIYANG AIRPORT</div>
    </div>
  </div>
);

const SHIFT_TIMES = [
  ['07003 A (07:00', '03:30'],
  ['14301 B (03:30', '23:00'],
  ['23003 C (11:00', '07:30'],
  ['07007 D (07:00', '17:00'],
];

const SHIFT_TIMES_MORE = [
  ['10003 E (07:00', '07:00'],
  ['11007 F (11:00', '20:00'],
  ['23003 G (00:00', '06:00'],
  ['13000 H(13:00', '21:00'],
];

const ShiftTime: React.FC<{ from: string; to: string }> = ({ from, to }) => (
  <span className="flex w-[153px] shrink-0">
    <span className="w-[94px]">{from}</span>
    <span className="w-[44px]">{to}</span>
    <span>)</span>
  </span>
);

const HEAD_CELL = 'border-r border-b border-r-[#b8b8b8] border-b-[#9b9b9b] bg-[#e6e6e6] font-normal';

const Sheet = () => (
  <table className="w-[1922px] table-fixed border-separate border-spacing-0 font-[family-name:'Liberation_Sans','Noto_Sans_CJK_SC',sans-serif] text-[11px] leading-[14px] text-black">
    <colgroup>
      <col className="w-[23px]" />
      <col className="w-[122px]" />
      <col className="w-[97px]" />
      <col className="w-[55px]" />
      <col className="w-[82px]" />
      <col className="w-[100px]" />
      <col className="w-[41px]" />
      <col className="w-[39px]" />
      {DATE_COLUMNS.map((col) => (
        <col key={col} className={col === 'K' || col === 'Q' ? 'w-[39px]' : 'w-[40px]'} />
      ))}
      <col className="w-[55px]" />
      <col className="w-[55px]" />
      <col className="w-[55px]" />
    </colgroup>
    <thead className="font-[family-name:'Open_Sans',sans-serif] text-[12px] text-[#333]">
      <tr>
        <td className={clsx(HEAD_CELL, 'relative h-4')}>
          <span className="absolute right-1 bottom-1 size-2 bg-[#b8b8b8] [clip-path:polygon(100%_0,100%_100%,0_100%)]" />
        </td>
        {['A', 'B', 'C', 'D', 'E', 'F', 'G', ...DATE_COLUMNS, 'AO'].map((col) => (
          <th key={col} scope="col" className={clsx(HEAD_CELL, col === 'G' && 'border-r-[#9b9b9b]')}>{col}</th>
        ))}
        <th scope="col" className="border-r border-b-2 border-r-[#b8b8b8] border-b-[#217346] bg-[#d2d2d2] font-normal text-[#217346]">AP</th>
        <th scope="col" className={HEAD_CELL}>AQ</th>
      </tr>
    </thead>
    <tbody>
      <tr>
        <RowHead n={1} h="h-[87px]" />
        <td colSpan={7} className={clsx(CELL, 'border-r-[#9b9b9b] align-top')}><Logo /></td>
        <td colSpan={30} className={clsx(CELL, "font-[family-name:Lato,'Noto_Sans_CJK_SC',sans-serif] leading-5 font-bold")}>
          <div className="w-[652px] text-[13px] whitespace-pre">ROOMS-FO Monthly Duty Roster- March 2025</div>
          <div className="w-[652px] text-[14px] whitespace-pre">{'房务部-前厅月度排班表(2025-11月)      '}</div>
        </td>
        <Blank />
      </tr>
      <tr>
        <RowHead n={2} h="h-[42px]" />
        <th colSpan={5} className={clsx(CELL, 'text-[15px]')}>Period</th>
        <th colSpan={2} className={clsx(CELL, 'border-r-[#9b9b9b] text-[15px]')}>Up.</th>
        {WEEKS.map((week) => (
          <th key={week.label} colSpan={week.span} className={clsx("border-b border-black font-[family-name:Lato,'Noto_Sans_CJK_SC',sans-serif] text-[10px] whitespace-nowrap", week.tone)}>
            {week.label}
          </th>
        ))}
        <Blank />
      </tr>
      <tr className="font-[family-name:Lato,sans-serif] text-[9px]">
        <RowHead n={3} h="h-[34px]" />
        {['Name of Staff|员工姓名', 'Employee ID|员工号', 'Position|职位', 'Contact No.|联系方式', 'Remark|备注'].map((head) => (
          <th key={head} rowSpan={2} className={clsx(CELL, "font-[family-name:'Liberation_Sans','Noto_Sans_CJK_SC',sans-serif] text-[11px]")}>
            {head.split('|')[0]}<br />{head.split('|')[1]}
          </th>
        ))}
        <th rowSpan={3} className={clsx(CELL, "border-b-[#9b9b9b] font-[family-name:'Liberation_Sans','Noto_Sans_CJK_SC',sans-serif] text-[11px]")}>OT<br />小时</th>
        <th rowSpan={3} className={clsx(CELL, "border-r-[#9b9b9b] border-b-[#9b9b9b] font-[family-name:'Liberation_Sans','Noto_Sans_CJK_SC',sans-serif] text-[11px]")}>AL<br />天数</th>
        {DATE_COLUMNS.map((col, i) => (
          <th key={col} className={clsx(CELL, i === HOLIDAY ? 'bg-[#ff0000]' : i % 7 > 4 && 'bg-[#c55a11]')}>{WEEKDAYS[i % 7]}</th>
        ))}
        <Blank />
      </tr>
      <tr className="font-[family-name:Lato,sans-serif] text-[9px]">
        <RowHead n={4} h="h-[38px]" />
        {DATES.map((date, i) => (
          <th key={date} className={clsx(CELL, 'whitespace-nowrap', i === HOLIDAY && 'bg-[#ff0000]')}>{date}</th>
        ))}
        <Blank />
      </tr>
      <tr>
        <RowHead n={5} h="h-[34px]" />
        <th colSpan={4} className={clsx(CELL, 'border-b-[#9b9b9b]')}>KWEAP-HI Rooms Forecast</th>
        <td className={clsx(CELL, 'border-b-[#9b9b9b]')} />
        {FORECAST.map((value, i) => (
          <td key={DATE_COLUMNS[i]} className={clsx(CELL, 'border-b-[#9b9b9b] font-[family-name:Lato,sans-serif] text-[9px] font-bold')}>
            {FORECAST_FLAGS.includes(i) && <Flag />}
            {value}
          </td>
        ))}
        <td className="border-r border-b border-r-[#d4d4d4] border-b-[#9b9b9b]" />
        <td className="border-r border-b border-r-[#d4d4d4] border-b-[#9b9b9b]" />
        <td className="border-b border-[#9b9b9b]" />
      </tr>
      {AFOM.map((staff) => <StaffRow key={staff.id} staff={staff} />)}
      <SectionRow n={7} label="GSM (KWEAP)" />
      {GSM.map((staff) => <StaffRow key={staff.id} staff={staff} />)}
      <SectionRow n={12} label="Front Desk (KWEAP）" />
      {FRONT_DESK.map((staff) => <StaffRow key={staff.id} staff={staff} />)}
      <SectionRow n={20} h="h-[30px]" />
      <tr className="bg-[#a9d08e] align-top font-bold">
        <RowHead h="h-12" />
        <td colSpan={7} className="overflow-hidden border-r border-[#9b9b9b] pl-0.5">
          <div className="font-[family-name:Lato,'Noto_Sans_CJK_SC',sans-serif] text-[12px] leading-[17px] text-[#ff0000]">Shift Remark （ KWEAP):</div>
          <div className="flex w-[533px] gap-1 overflow-hidden">
            {SHIFT_TIMES.map(([from, to]) => <ShiftTime key={from} from={from} to={to} />)}
          </div>
        </td>
        <td colSpan={30} className="border-r border-black pt-[17px]">
          <div className="flex">
            <span className="w-[38px]">7:00</span>
            <span className="w-[15px]">)</span>
            {SHIFT_TIMES_MORE.map(([from, to]) => <ShiftTime key={from} from={from} to={to} />)}
          </div>
        </td>
        <td colSpan={3} className="bg-white" />
      </tr>
    </tbody>
  </table>
);

const ScrollArrow: React.FC<{ label: string; turn: string }> = ({ label, turn }) => (
  <button aria-label={label} className="flex size-[15px] shrink-0 items-center justify-center border border-[#ababab] bg-white text-[#777]">
    <Art w={7} h={4} className={turn}><path d="M0 0h7L3.500 4z" fill="currentColor" stroke="none" /></Art>
  </button>
);

const Workspace = () => (
  <div className="flex min-h-0 flex-1">
    <main className="min-w-0 flex-1 overflow-hidden border-r border-b border-[#9b9b9b] bg-white">
      <Sheet />
    </main>
    <div className="flex w-[21px] shrink-0 flex-col items-center pt-0.5">
      <ScrollArrow label="向上滚动" turn="rotate-180" />
      <div className="h-0.5 w-[15px] bg-[#ababab]" />
      <div className="flex w-[15px] flex-1 flex-col bg-[#dadada]">
        <div className="h-[82%] border border-[#ababab] bg-white" />
      </div>
      <ScrollArrow label="向下滚动" turn="" />
    </div>
  </div>
);

const SheetTabs = () => (
  <div className="flex h-[27px] shrink-0 items-start border-b border-[#c6c6c6] text-[15px]">
    <div className="flex h-[27px] w-[100px] items-center gap-6 pl-[27px] text-[#bbb]">
      <button aria-label="上一张工作表"><Art w={4} h={8}><path d="M4 0v8L0 4z" fill="currentColor" stroke="none" /></Art></button>
      <button aria-label="下一张工作表"><Art w={4} h={8}><path d="M0 0v8l4-4z" fill="currentColor" stroke="none" /></Art></button>
    </div>
    <button className="h-6 w-[46px] border-x border-b-2 border-x-[#9b9b9b] border-b-[#217346] bg-white text-[14px] text-[#217346]">1月</button>
    <button className="h-6 w-11 border-r border-[#9b9b9b] text-[14px] text-[#444]">2月</button>
    <button aria-label="新工作表" className="mt-1.5 ml-[33px] text-[#777]">
      <Art w={16} h={16}><circle cx="8" cy="8" r="7.300" /><path d="M8 4v8M4 8h8" strokeWidth="2" /></Art>
    </button>
    <div className="ml-auto flex w-[768px] items-center pt-1.5 pr-[21px]">
      <Art w={2} h={11} className="mr-[15px] text-[#aaa]"><path d="M1 0v2M1 4.500v2M1 9v2" strokeWidth="2" /></Art>
      <ScrollArrow label="向左滚动" turn="rotate-90" />
      <div className="mr-[3px] flex h-[15px] flex-1 bg-[#dadada] pr-[21px] pl-[21px]">
        <div className="flex-1 border border-[#ababab] bg-white" />
      </div>
      <ScrollArrow label="向右滚动" turn="-rotate-90" />
    </div>
  </div>
);

const StatusBar = () => (
  <footer className="flex h-[22px] shrink-0 items-center bg-[#f3f3f3] pr-1.5 pl-2 text-[#444]">
    <span>输入</span>
    <div className="ml-auto flex items-center text-[#666]">
      <button aria-label="普通" className="w-[39px]"><Art w={13} h={13}><path d="M.5.5h12v12H.5zM.5 4.500h12M.5 8.500h12M4.500.5v12M8.500.5v12" /></Art></button>
      <button aria-label="页面布局" className="w-[38px]"><Art w={14} h={13}><path d="M.5.5h13v12h-13zM3.500 2.500h7v8h-7zM5 4.500h4M5 6.500h4M5 8.500h4" /></Art></button>
      <button aria-label="分页预览" className="w-[31px]"><Art w={14} h={13}><path d="M.5.5h13v12h-13zM4.500.5v6M8.500.5v6M.5 6.500h8" /></Art></button>
      <button aria-label="缩小"><Art w={6} h={2}><path d="M0 1h6" strokeWidth="2" /></Art></button>
      <input
        type="range"
        aria-label="缩放"
        className="mx-1 h-px w-[100px] appearance-none bg-[#b0b0b0] [&::-webkit-slider-thumb]:h-[6px] [&::-webkit-slider-thumb]:w-px [&::-webkit-slider-thumb]:appearance-none [&::-webkit-slider-thumb]:bg-[#b0b0b0]"
      />
      <button aria-label="放大"><Art w={7} h={8}><path d="M3.500 0v8M0 4h7" strokeWidth="2" /></Art></button>
      <span className="ml-2.5 w-7 text-[#b1b1b1]">80%</span>
    </div>
  </footer>
);

/* ---------- taskbar ---------- */

const TaskItem: React.FC<{ label: string; running?: boolean; active?: string; bar?: string; children: React.ReactNode }> = ({ label, running, active, bar, children }) => (
  <button aria-label={label} className="relative flex h-[47px] w-11 items-center justify-center">
    {active && <span className={clsx('absolute inset-x-0.5 inset-y-1 rounded', active)} />}
    <span className="relative">{children}</span>
    {running && <span className="absolute bottom-1.5 left-[19px] h-[3px] w-1.5 rounded-full bg-[#7d8f86]" />}
    {bar && <span className={clsx('absolute bottom-1.5 left-1/2 h-[3px] -translate-x-1/2 rounded-full', bar)} />}
  </button>
);

const Taskbar = () => (
  <div className="grid h-12 shrink-0 grid-cols-[1fr_auto_1fr] items-center border-t border-[#a5bfb2] bg-[#c8ecdd] text-[#1a1a1a]">
    <button className="flex items-center gap-1.5 pb-0.5 pl-[19px] text-left leading-[15px]">
      <svg width="25" height="17" viewBox="0 0 25 17" aria-hidden="true">
        <defs>
          <linearGradient id="cloud" x1="0" y1="0" x2="1" y2="1">
            <stop offset="0" stopColor="#6f95e8" />
            <stop offset="1" stopColor="#cfdffa" />
          </linearGradient>
        </defs>
        <path d="M5 16a5 5 0 010-9 7 7 0 0112-3 5 5 0 013 3 5 5 0 01-1 9z" fill="url(#cloud)" />
        <path d="M14 16a6 6 0 012-9c6-2 10 5 7 9z" fill="#8aabf0" opacity=".6" />
      </svg>
      <span>12°C<br />阴</span>
    </button>

    <div className="flex items-center">
      <TaskItem label="开始">
        <svg width="22" height="23" viewBox="0 0 22 23" aria-hidden="true">
          <defs>
            <linearGradient id="win" x1="0" y1="0" x2="1" y2="1">
              <stop offset="0" stopColor="#3cc4fb" />
              <stop offset="1" stopColor="#0a6fd0" />
            </linearGradient>
          </defs>
          <path d="M0 0h10.500v11H0zM11.500 0H22v11H11.500zM0 12h10.500v11H0zM11.500 12H22v11H11.500z" fill="url(#win)" />
        </svg>
      </TaskItem>
      <label className="mx-1 flex h-[31px] w-[218px] items-center rounded-full border border-[#b4d8c9] bg-[#edf8f3] pr-1 pl-2.5">
        <Art w={15} h={15} className="text-[#222]"><circle cx="6.500" cy="6.500" r="5.500" strokeWidth="1.700" /><path d="M10.500 10.500l4 4" strokeWidth="2" /></Art>
        <input placeholder="搜索" aria-label="搜索" className="ml-2.5 min-w-0 flex-1 text-[14px] outline-none placeholder:text-[#555]" />
        <svg width="47" height="24" viewBox="0 0 47 24" aria-hidden="true">
          <path d="M1 9C0 3 6-1 11 1c5-2 10 0 9 4 0 3-3 5-6 6-3 5-11 4-13-2z" fill="#e8ad62" />
          <path d="M4 10c4-1 7-4 9-8l3 1c-1 5-5 9-10 10z" fill="#f3cf96" />
          <path d="M5 12c5-1 9-5 11-9l2 1c-2 6-7 10-12 11z" fill="#d9506a" />
          <path d="M8 14c3 2 4 5 9 8M12 12c1 4-1 7 3 11M17 16c-3 0-6 2-7 5" stroke="#d9506a" strokeWidth="1.800" fill="none" />
          <ellipse cx="35" cy="18" rx="11" ry="4" fill="#8d78b8" />
          <path d="M28 4c2-3 12-3 14 0l-2 13c-2 2-8 2-10 0z" fill="#4c3c72" />
          <path d="M30 13c3 2 8 2 11 0l-1 4c-2 2-8 2-10 0z" fill="#b3a0dc" />
        </svg>
      </label>
      <TaskItem label="任务视图">
        <svg width="24" height="22" viewBox="0 0 24 22" aria-hidden="true">
          <path d="M0 6h16v16H0z" fill="#2a2a2a" />
          <path d="M6 0h18v16H6z" fill="#fafafa" />
          <path d="M6 6h10v10H6z" fill="#bdbdbd" />
        </svg>
      </TaskItem>
      <TaskItem label="文件资源管理器" running>
        <svg width="24" height="22" viewBox="0 0 24 22" aria-hidden="true">
          <path d="M0 2q0-2 2-2h6l3 3h11q2 0 2 2v5H0z" fill="#dc9a1a" />
          <path d="M0 6h9l3-3h10q2 0 2 2v15q0 2-2 2H2q-2 0-2-2z" fill="#ffcf4d" />
          <path d="M4 22v-6q0-2 2-2h12q2 0 2 2v6z" fill="#1373c4" />
          <path d="M8 22v-3h8v3z" fill="#0b4f93" />
        </svg>
      </TaskItem>
      <TaskItem label="Microsoft Edge" running>
        <svg width="24" height="24" viewBox="0 0 24 24" aria-hidden="true">
          <circle cx="12" cy="12" r="12" fill="#1277cf" />
          <path d="M1 9C3-3 23-3 24 10c0 5-5 7-9 5 2-3 0-7-4-7-5-1-9 1-10 5z" fill="#3dd2b4" />
          <path d="M17 1c5 2 8 7 7 11-2 4-6 4-9 3 2-3 4-8 2-14z" fill="#5fdc55" />
          <path d="M8 10c-4 6 1 13 8 13 3-1 5-3 6-5-4 2-9 0-10-4-1-2 0-4 1-5-2-1-4 0-5 1z" fill="#0c4a9c" />
          <circle cx="13.500" cy="12" r="2.800" fill="#c8ecdd" />
        </svg>
      </TaskItem>
      <TaskItem label="Microsoft Store">
        <svg width="23" height="24" viewBox="0 0 23 24" aria-hidden="true">
          <path d="M6 6V2q0-1 1-1h9q1 0 1 1v4" fill="none" stroke="#35b7f0" strokeWidth="2" />
          <path d="M0 5h23v16q0 3-3 3H3q-3 0-3-3z" fill="#124f93" />
          <path d="M7 9h4v4H7z" fill="#f25022" /><path d="M12 9h4v4h-4z" fill="#7fba00" /><path d="M7 14h4v4H7z" fill="#00a4ef" /><path d="M12 14h4v4h-4z" fill="#ffb900" />
        </svg>
      </TaskItem>
      <TaskItem label="计算器" running>
        <svg width="18" height="24" viewBox="0 0 18 24" aria-hidden="true">
          <rect width="18" height="24" rx="1.500" fill="#6d7680" />
          <path d="M2 2h14v4H2z" fill="#4cd0f5" />
          <path d="M2 8h4v4H2zM7 8h4v4H7zM12 8h4v4h-4zM2 13h4v4H2zM7 13h4v4H7zM2 18h4v4H2zM7 18h4v4H7z" fill="#d4d9de" />
          <path d="M12 13h4v9h-4z" fill="#134f99" />
        </svg>
      </TaskItem>
      <TaskItem label="微信" active="bg-[#e8aca9]" bar="w-8 bg-[#c42b1c]">
        <svg width="25" height="20" viewBox="0 0 25 20" aria-hidden="true">
          <path d="M0 7.500C0-2 17-3 18 7c-5 0-9 4-7 8-2 1-4 0-6 0l-3 2v-4C1 12 0 10 0 7.500z" fill="#1ecb62" />
          <path d="M11 13c0-8 14-7 14 0 0 2-1 4-2 4v3l-3-1c-5 1-9-2-9-6z" fill="#ededed" />
          <circle cx="5.500" cy="5" r="1.200" fill="#0b6d33" /><circle cx="12" cy="5" r="1.200" fill="#0b6d33" />
          <circle cx="15.500" cy="11.500" r="1" fill="#888" /><circle cx="20.500" cy="11.500" r="1" fill="#888" />
        </svg>
      </TaskItem>
      <TaskItem label="Google Chrome" running>
        <svg width="24" height="24" viewBox="0 0 24 24" aria-hidden="true">
          <circle cx="12" cy="12" r="12" fill="#fbc116" />
          <path d="M12 12L1.600 6A12 12 0 0122.400 6z" fill="#e33b2e" />
          <path d="M12 12L1.600 6A12 12 0 0012 24l5-9z" fill="#27a24b" />
          <path d="M12 6.500h10.700A12 12 0 0012 0z" fill="#e33b2e" />
          <circle cx="12" cy="12" r="5.600" fill="#fff" />
          <circle cx="12" cy="12" r="4.300" fill="#3f7fee" />
        </svg>
      </TaskItem>
      <TaskItem label="记账" running>
        <svg width="23" height="24" viewBox="0 0 23 24" aria-hidden="true">
          <rect width="23" height="24" rx="1.500" fill="#2459ff" />
          <path d="M6 4l5.500 6L17 4M11.500 10v11M6 10.500h11M6 15h11" stroke="#c8ecdd" strokeWidth="2" fill="none" />
        </svg>
      </TaskItem>
      <TaskItem label="Excel" active="bg-[#e3f5ed] border border-[#d3eee2]" bar="w-4 bg-[#0a6fd0]">
        <svg width="23" height="23" viewBox="0 0 23 23" aria-hidden="true">
          <path d="M12 3h10v17H12z" fill="#fff" stroke="#217346" />
          <path d="M14 6h3M18 6h3M14 9h3M18 9h3M14 12h3M18 12h3M14 15h3M18 15h3M14 18h3M18 18h3" stroke="#217346" strokeWidth="1.500" />
          <path d="M0 2.500L14 0v23L0 20.500z" fill="#1d6b40" />
          <path d="M4 8l6 8M10 8l-6 8" stroke="#fff" strokeWidth="1.900" />
        </svg>
      </TaskItem>
    </div>

    <div className="flex items-center justify-end pr-[19px]">
      <button aria-label="显示隐藏的图标" className="flex w-8 justify-center"><Art w={11} h={6}><path d="M.8 5.500l4.700-4.500 4.700 4.500" strokeWidth="1.500" /></Art></button>
      <button aria-label="同步" className="flex w-8 justify-center">
        <Art w={17} h={17}>
          <path d="M1 8a7 7 0 0113-4M15 0v5h-5M8 16a7 7 0 01-6-4M1 16v-4h4" strokeWidth="1.400" />
          <circle cx="12.500" cy="12.500" r="4" fill="#0078d4" stroke="none" />
        </Art>
      </button>
      <button className="w-8 pb-px text-[14px]">中</button>
      <button className="w-11 pb-px text-[14px]">拼</button>
      <button aria-label="网络" className="flex w-[30px] justify-center">
        <Art w={17} h={16}><path d="M10 1.500H2.500q-1.500 0-1.500 1.500v8q0 1.500 1.500 1.500h9q1.500 0 1.500-1.500V8M4 15.500h7M5.500 12.500v3M9 12.500v3M11.500 1h4v4h-4zM13.500 5v4" strokeWidth="1.300" /></Art>
      </button>
      <button aria-label="音量" className="flex w-[18px] justify-center">
        <Art w={16} h={14}><path d="M.7 5v4h2.500L7 12.500v-11L3.200 5zM9 5q1.500 2 0 4M11 3q3 4 0 8M13 1q4.500 6 0 12" strokeWidth="1.200" /></Art>
      </button>
      <time className="w-[78px] pb-0.5 text-right text-[12px] leading-4">14:28<br />2025/12/16</time>
    </div>
  </div>
);

const App = () => (
  <div className="flex h-screen min-h-[600px] flex-col overflow-hidden bg-[#e6e6e6] font-[family-name:'Open_Sans','Noto_Sans_CJK_SC',sans-serif] text-[12px]">
    <div className="shrink-0 bg-[#217346]">
      <TitleBar />
      <RibbonTabs />
    </div>
    <Ribbon />
    <FormulaBar />
    <Workspace />
    <SheetTabs />
    <StatusBar />
    <Taskbar />
  </div>
);

export default App;
